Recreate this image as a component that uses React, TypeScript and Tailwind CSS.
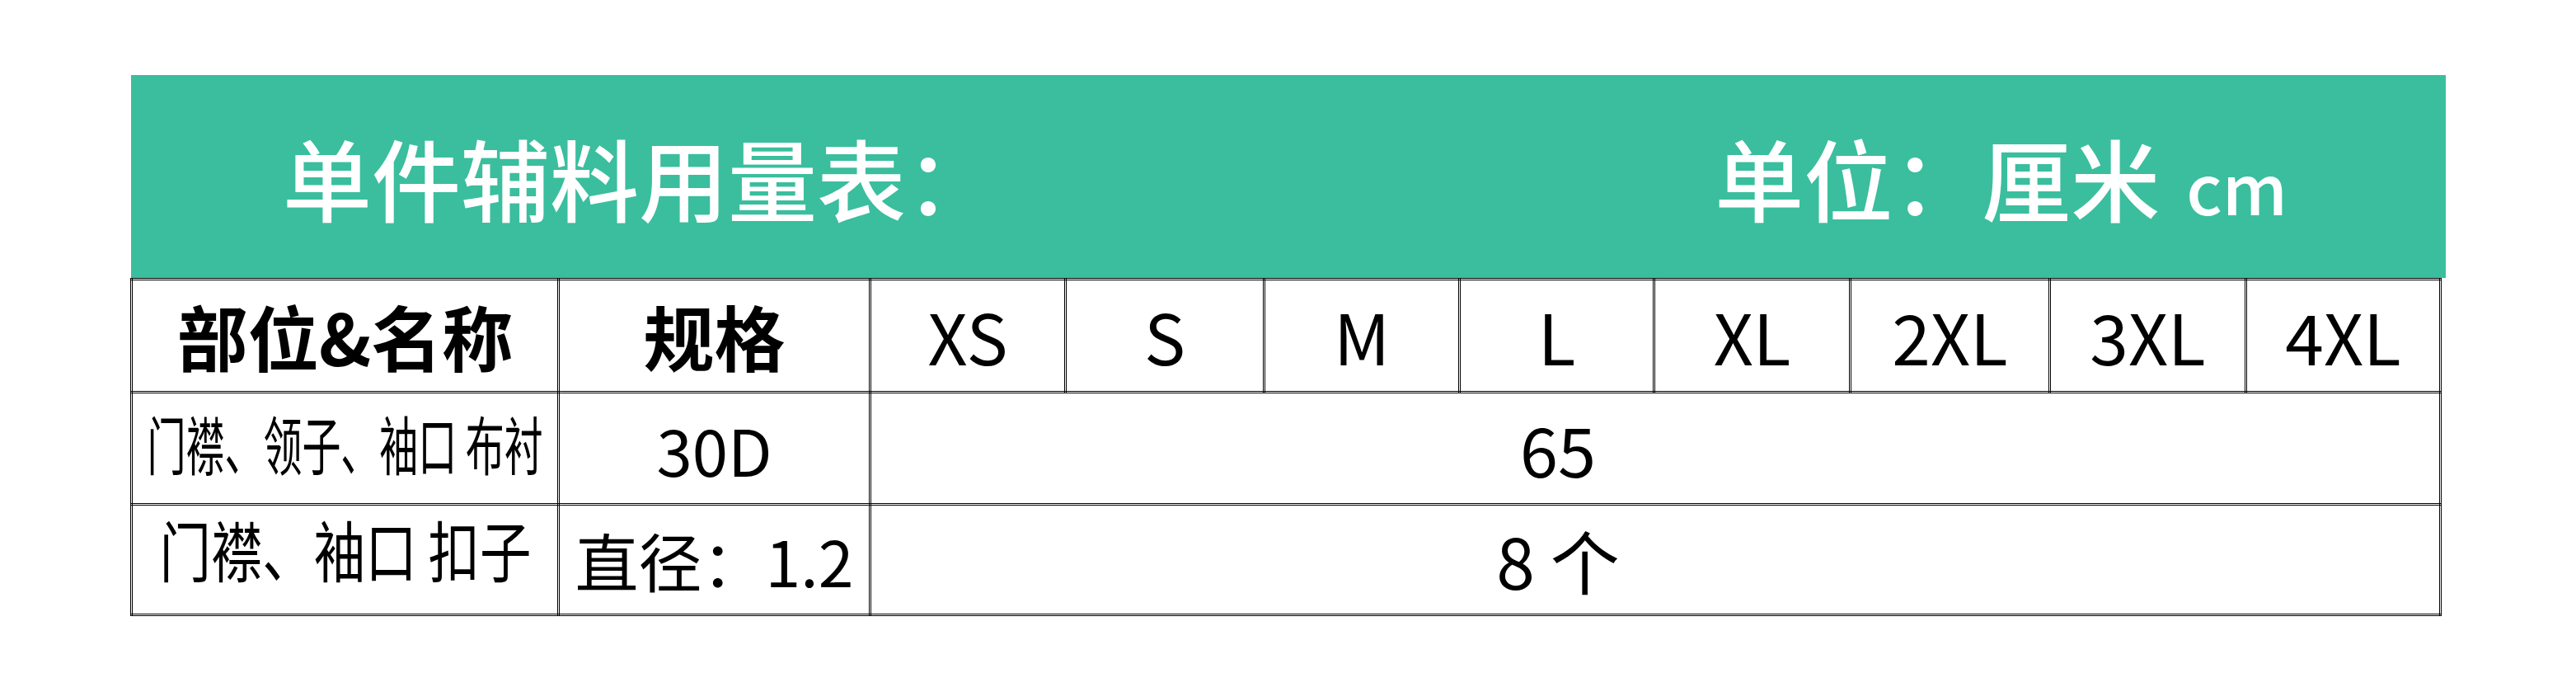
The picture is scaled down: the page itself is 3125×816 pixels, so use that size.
import React from "react";

const font = { fontFamily: '"Noto Sans CJK SC", "Noto Sans", sans-serif' };

const sizes = ["XS", "S", "M", "L", "XL", "2XL", "3XL", "4XL"];
const colW = [518, 378, 237, 241, 237, 236, 238, 242, 238, 236];

export default function App() {
  return (
    <div
      className="w-[3125px] h-[816px] bg-white pt-[91px] pl-[158px] text-black"
      style={font}
    >
      <div className="ml-[1px] w-[2808px] h-[246px] bg-[#3abe9e] flex items-center text-white leading-none">
        <div className="pl-[184px] text-[108px] font-medium whitespace-nowrap">
          单件辅料用量表：
        </div>
        <div className="ml-auto mr-[192px] flex items-baseline whitespace-nowrap font-medium">
          <span className="text-[108px]">单位：厘米</span>
          <span className="ml-[32px] text-[84px]">cm</span>
        </div>
      </div>
      <table className="w-[2804px] table-fixed border-collapse leading-none">
        <colgroup>
          {colW.map((w, i) => (
            <col key={i} style={{ width: w }} />
          ))}
        </colgroup>
        <tbody>
          <tr className="h-[137px]">
            <td className="border-[3px] border-double border-black p-0 text-center text-[86px] font-bold">
              部位&amp;名称
            </td>
            <td className="border-[3px] border-double border-black p-0 text-center text-[86px] font-bold">
              规格
            </td>
            {sizes.map((s) => (
              <td
                key={s}
                className="border-[3px] border-double border-black p-0 text-center text-[84px] font-normal"
              >
                {s}
              </td>
            ))}
          </tr>
          <tr className="h-[136px]">
            <td className="border-[3px] border-double border-black p-0">
              <div className="flex justify-center pb-[14px]">
                <span className="inline-block whitespace-nowrap text-[77px] scale-x-[0.61]">
                  门襟、领子、袖口 布衬
                </span>
              </div>
            </td>
            <td className="border-[3px] border-double border-black p-0 text-center text-[78px]">
              30D
            </td>
            <td
              colSpan={8}
              className="border-[3px] border-double border-black p-0 pr-[236px] text-center text-[83px]"
            >
              65
            </td>
          </tr>
          <tr className="h-[134px]">
            <td className="border-[3px] border-double border-black p-0">
              <div className="flex justify-center pb-[30px]">
                <span className="inline-block whitespace-nowrap text-[80px] scale-x-[0.78]">
                  门襟、袖口 扣子
                </span>
              </div>
            </td>
            <td className="border-[3px] border-double border-black p-0">
              <div className="flex justify-center">
                <span className="whitespace-nowrap text-[77px]">直径：1.2</span>
              </div>
            </td>
            <td
              colSpan={8}
              className="border-[3px] border-double border-black p-0 pr-[236px] text-center text-[84px]"
            >
              8 个
            </td>
          </tr>
        </tbody>
      </table>
    </div>
  );
}
